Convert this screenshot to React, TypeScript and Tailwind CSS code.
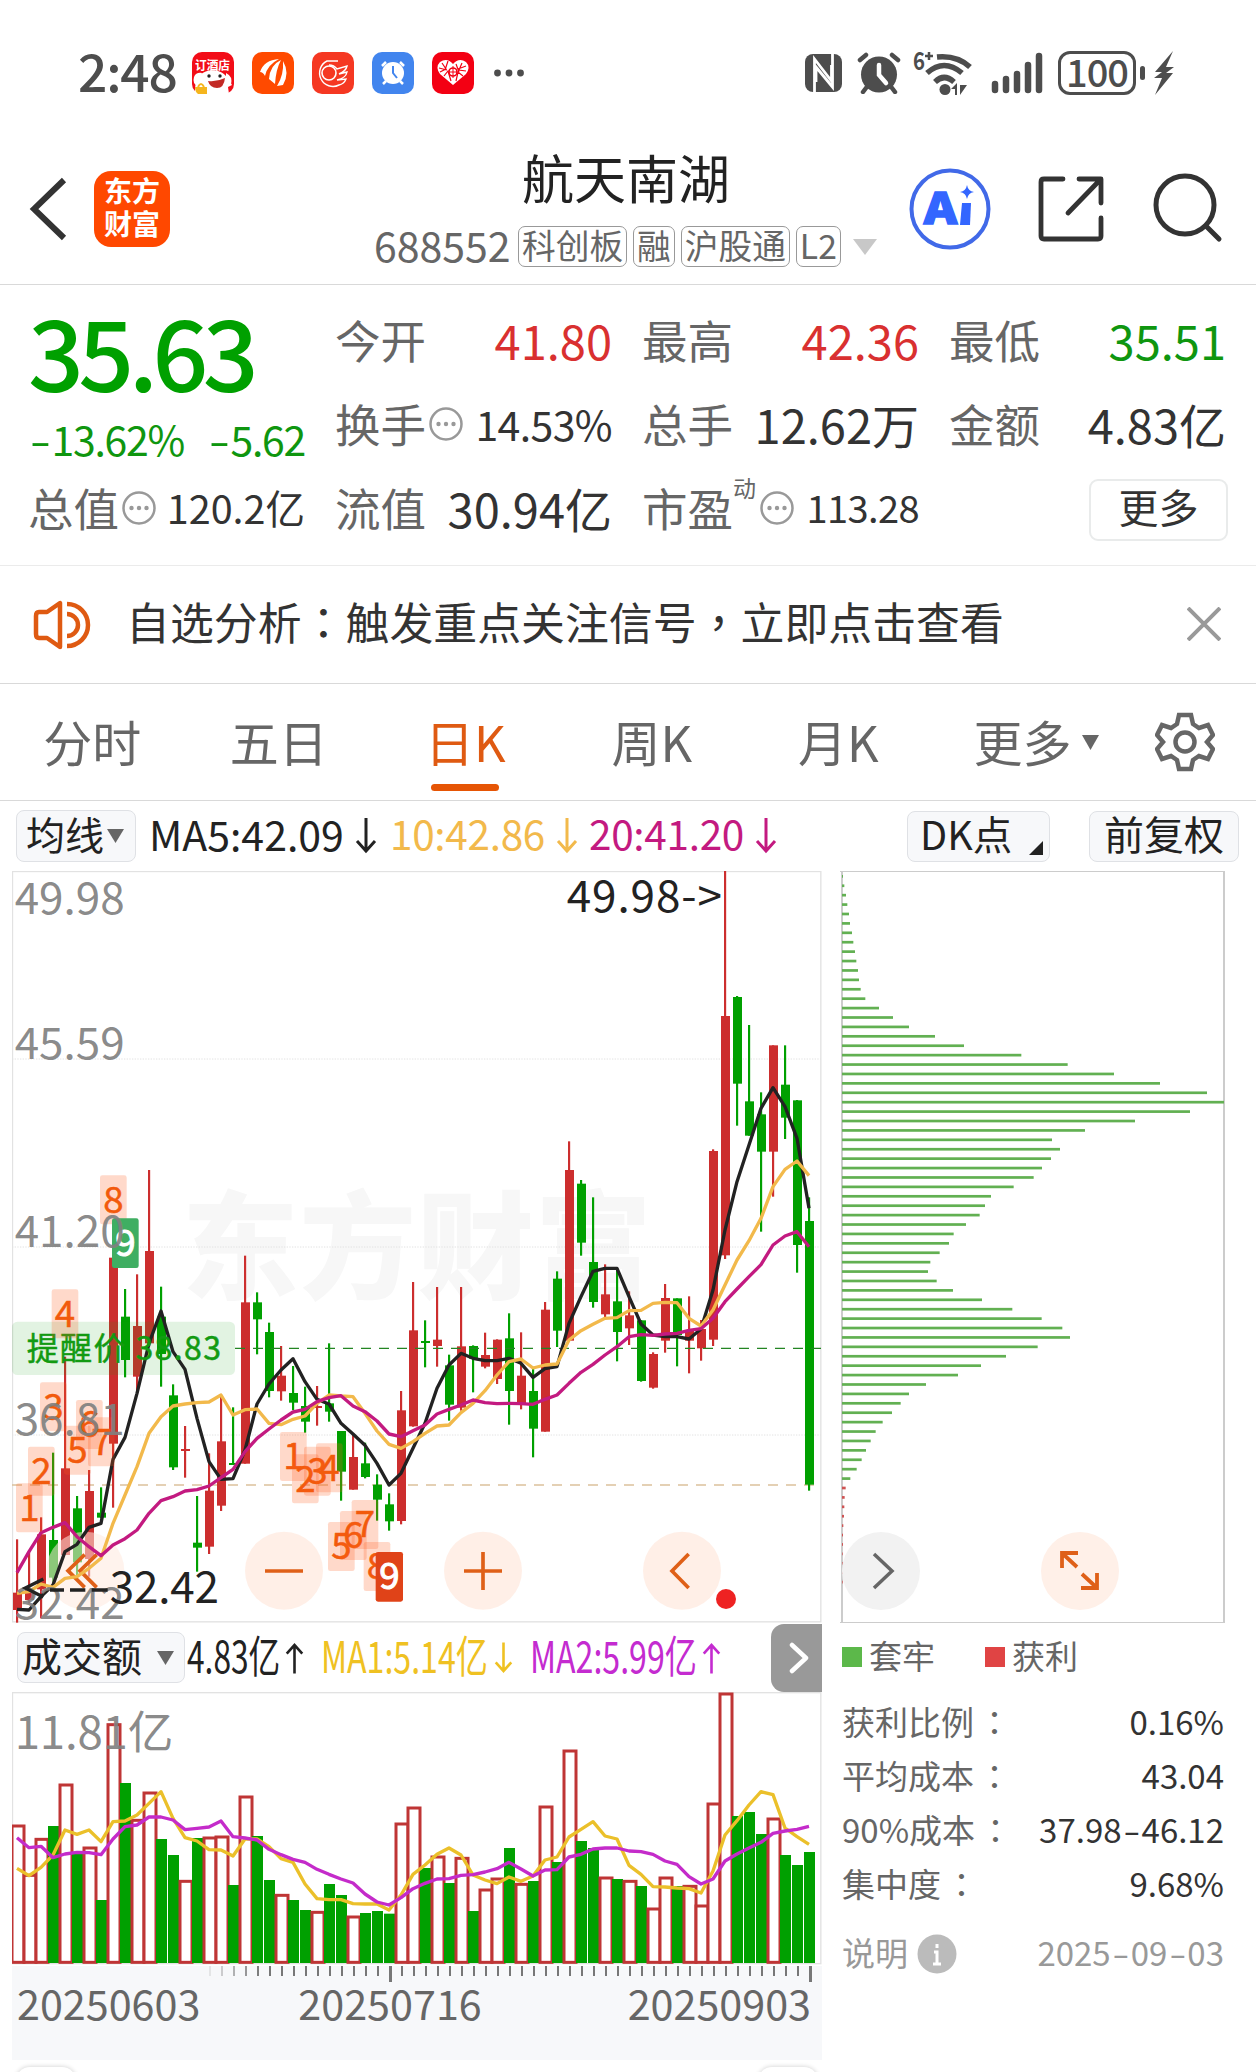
import type { ReactNode } from "react";
import { clsx } from "clsx";

type Tone = "up" | "down" | "normal";

// Chart data is kept in thirds of a pixel: [up, high, low, bodyTop, bodyBottom]
type Candle = [number, number, number, number, number];

const CANDLES: Candle[] = [
  [1, 1228, 1478, 1388, 1440], [1, 1268, 1420, 1375, 1410], [1, 1162, 1465, 1213, 1378], [0, 968, 1370, 1230, 1343],
  [1, 680, 1275, 1015, 1275], [0, 1098, 1335, 1135, 1297], [1, 1020, 1340, 1083, 1287], [0, 1072, 1165, 1148, 1163],
  [1, 383, 1133, 383, 941], [0, 477, 742, 560, 690], [1, 433, 780, 588, 740], [1, 120, 650, 363, 640],
  [0, 470, 770, 560, 672], [0, 763, 1020, 796, 1012], [1, 888, 1043, 957, 963], [0, 1098, 1325, 1238, 1253],
  [1, 970, 1272, 1082, 1250], [1, 798, 1143, 934, 1127], [0, 832, 1005, 999, 1005], [1, 377, 1001, 517, 1001],
  [0, 487, 673, 517, 568], [0, 578, 802, 606, 783], [1, 648, 812, 737, 784], [0, 708, 840, 789, 818],
  [0, 770, 908, 828, 875], [1, 768, 887, 828, 834], [0, 640, 875, 820, 845], [0, 903, 1112, 903, 1025],
  [1, 912, 1079, 981, 1079], [0, 938, 1045, 1000, 1041], [0, 1033, 1172, 1064, 1109], [0, 1090, 1202, 1123, 1174],
  [1, 783, 1183, 841, 1173], [1, 456, 890, 601, 889], [0, 571, 712, 633, 639], [1, 471, 710, 629, 648],
  [0, 674, 872, 706, 824], [1, 471, 842, 649, 833], [0, 646, 787, 648, 686], [1, 608, 715, 675, 710],
  [1, 628, 762, 629, 747], [0, 550, 884, 625, 783], [1, 607, 838, 737, 824], [0, 714, 982, 783, 896],
  [1, 516, 905, 539, 905], [0, 424, 651, 446, 602], [1, 34, 632, 120, 632], [0, 150, 377, 161, 338],
  [0, 202, 533, 396, 516], [1, 403, 562, 493, 553], [0, 420, 694, 514, 606], [1, 484, 645, 556, 595],
  [0, 570, 755, 571, 753], [1, 667, 776, 672, 773], [1, 462, 668, 504, 632], [0, 505, 709, 505, 615],
  [1, 499, 730, 600, 632], [1, 570, 692, 597, 655], [1, 58, 648, 63, 629], [1, -777, 387, -342, 376],
  [0, -402, -13, -399, -139], [0, -315, 17, -86, 17], [0, -113, 305, -47, 65], [1, -254, 200, -254, 65],
  [0, -254, 27, -136, -37], [0, -90, 428, -89, 345], [0, 202, 1082, 273, 1064],
];

const MA5 = [
  1438, 1440, 1400, 1365, 1265, 1243, 1192, 1180, 988, 922, 790, 640, 543, 665, 718, 865, 995, 1048, 1046, 960, 822, 762,
  720, 686, 755, 808, 822, 880, 912, 946, 1000, 1065, 1030, 955, 880, 775, 705, 670, 685, 692, 692, 685, 700, 742, 716,
  710, 580, 500, 424, 415, 415, 500, 582, 615, 620, 620, 627, 597, 480, 300, 155, 45, -65, -127, -70, 25, 235,
];
const MA10 = [
  1390, 1385, 1362, 1372, 1345, 1340, 1315, 1285, 1180, 1095, 1010, 910, 860, 828, 822, 818, 816, 795, 855, 839, 837, 880,
  884, 868, 858, 820, 795, 798, 800, 850, 903, 943, 955, 935, 910, 888, 885, 848, 820, 782, 735, 695, 687, 714, 705, 702,
  630, 602, 583, 565, 563, 542, 541, 520, 517, 518, 565, 588, 540, 465, 390, 332, 265, 170, 118, 93, 137,
];
const MA20 = [
  1328, 1265, 1208, 1192, 1178, 1220, 1250, 1277, 1245, 1226, 1200, 1150, 1112, 1100, 1083, 1079, 1068, 1043, 1018, 965,
  925, 897, 870, 846, 838, 815, 803, 797, 828, 845, 873, 912, 920, 902, 885, 852, 838, 825, 810, 818, 821, 820, 821, 823,
  808, 795, 760, 727, 703, 675, 650, 620, 614, 616, 612, 610, 601, 596, 565, 515, 477, 440, 404, 345, 318, 305, 350,
];

const VOLUMES = [
  614, 762, 654, 618, 491, 700, 680, 840, 310, 489, 597, 515, 657, 705, 780, 654, 650, 647, 795, 527, 648, 780, 822, 840,
  870, 873, 792, 825, 887, 879, 873, 881, 608, 560, 744, 707, 789, 711, 873, 806, 773, 684, 789, 783, 557, 726, 389, 663,
  684, 770, 777, 780, 798, 863, 770, 798, 795, 854, 548, 218, 588, 576, 642, 593, 705, 735, 696,
];
const VOL_MA1 = [
  745, 767, 742, 705, 630, 643, 630, 665, 605, 603, 585, 550, 515, 595, 653, 663, 689, 690, 708, 657, 657, 680, 716, 727,
  792, 836, 839, 839, 851, 852, 852, 870, 825, 763, 735, 703, 684, 705, 765, 780, 791, 771, 784, 768, 720, 711, 651, 628,
  605, 648, 657, 736, 763, 800, 801, 804, 806, 819, 753, 645, 602, 555, 515, 524, 624, 650, 673,
];
const VOL_MA2 = [
  653, 683, 679, 713, 702, 697, 698, 704, 657, 620, 615, 591, 591, 600, 629, 625, 621, 603, 650, 654, 660, 688, 704, 718,
  727, 748, 763, 777, 789, 822, 846, 855, 833, 806, 790, 777, 776, 766, 764, 756, 746, 727, 747, 768, 750, 749, 711, 703,
  687, 684, 684, 693, 695, 703, 723, 733, 770, 792, 777, 723, 702, 684, 667, 640, 633, 628, 619,
];

const CHIPS = [
  39, 43, 48, 52, 57, 60, 66, 70, 75, 79, 84, 87, 92, 106, 147, 189, 237, 315, 402, 574, 713, 852, 990, 1131, 1182, 1080,
  915, 765, 666, 690, 663, 636, 611, 551, 483, 465, 449, 408, 371, 357, 329, 301, 294, 320, 369, 456, 547, 635, 697, 720,
  623, 528, 453, 384, 288, 237, 212, 186, 158, 137, 122, 108, 95, 80, 61, 47, 44, 43, 42, 40, 39, 39, 38, 38, 38, 38,
];
const FIRST_PROFIT_CHIP = 65;

const MARKS: [string, number, number][] = [
  ["8", 300, 136], ["4", 155, 478], ["3", 120, 757], ["2", 84, 950], ["1", 48, 1060], ["5", 192, 887], ["6", 228, 810],
  ["7", 264, 862], ["1", 840, 906], ["2", 876, 973], ["3", 912, 950], ["4", 948, 940], ["5", 984, 1176],
  ["6", 1020, 1143], ["7", 1055, 1110], ["8", 1091, 1236],
];

const AXIS_LABELS: [string, number][] = [
  ["49.98", -649], ["45.59", -213], ["41.20", 352], ["36.81", 915], ["32.42", 1467],
];

const xAt = (index: number) => 51 + 36 * index;
const toPoints = (values: number[]) => values.map((value, index) => `${xAt(index)},${value}`).join(" ");

export default function App() {
  return (
    <div className="flex h-[2072px] w-[1256px] flex-col overflow-hidden bg-white font-['Noto_Sans_CJK_SC',sans-serif] leading-none text-[#333]">
      <StatusBar />
      <Header />
      <QuotePanel />
      <Notice />
      <Tabs />
      <IndicatorRow />
      <main className="flex gap-[18px] pl-3">
        <section className="w-[810px] shrink-0">
          <CandleChart />
          <VolumeHeader />
          <VolumeChart />
          <DateAxis />
        </section>
        <ChipPanel />
      </main>
    </div>
  );
}

function StatusBar() {
  return (
    <div className="flex h-[145px] shrink-0 items-center pl-[78px] text-[#4d4d4d]">
      <span className="relative -top-[3px] w-[114px] text-[51.500px] font-medium tracking-[-1.200px]">2:48</span>
      <div className="flex gap-[18px]">
        <svg className="size-[42px]" viewBox="0 0 42 42">
          <rect width="42" height="42" rx="10" fill="#f20d18" />
          <path d="M3 42q-1-12 5-19c7-7 20-6 26 1l6 9-4 2 1 7z" fill="#fff" />
          <path d="M2 25q2-5 8-4l-4 13q-6-2-4-9M34 21q7 3 5 12l-5-3z" fill="#fff" />
          <circle cx="17" cy="24" r="1.700" fill="#222" />
          <circle cx="28" cy="24" r="1.700" fill="#222" />
          <path d="M16 29q9 1 17-3-1 10-8 10-7 0-9-7" fill="#c22a25" />
          <path d="M3 35h12v7H6q-3-2-3-7" fill="#f5b51d" />
          <path d="M6 35q3-6 6 0" fill="none" stroke="#f5b51d" strokeWidth="2" />
          <text x="3" y="18" fontSize="12" fontWeight="700" fill="#fff" textLength="35" lengthAdjust="spacingAndGlyphs">订酒店</text>
        </svg>
        <svg className="size-[42px]" viewBox="0 0 42 42">
          <rect width="42" height="42" rx="10" fill="#ff4a00" />
          <path d="M8 20Q12 8 27 7 15 13 13 24q-2-4-5-4M17 27Q18 13 29 8q-5 9-6 24zM25 34q7-11 6-25 7 12 0 24z" fill="#fff" />
        </svg>
        <svg className="size-[42px]" viewBox="0 0 42 42">
          <rect width="42" height="42" rx="10" fill="#f53822" />
          <circle cx="17" cy="21" r="7" fill="none" stroke="#fff" strokeWidth="1.600" />
          <path d="M26 9H15A12 12 0 1 0 27 33q5-1 7-6l-9 1q9-2 10-8l-8 2q7-3 8-8l-10 3q-3-4-8-4" fill="none" stroke="#fff" strokeWidth="1.400" />
        </svg>
        <svg className="size-[42px]" viewBox="0 0 42 42">
          <rect width="42" height="42" rx="10" fill="#4285ee" />
          <circle cx="21" cy="21" r="11" fill="#fff" />
          <path d="M14 29l-3 3M28 29l3 3M10 14l4-4M32 14l-4-4" stroke="#fff" strokeWidth="2.500" />
          <path d="M21 14v7l4 5" fill="none" stroke="#4285ee" strokeWidth="2" />
        </svg>
        <svg className="size-[42px]" viewBox="0 0 42 42">
          <rect width="42" height="42" rx="10" fill="#f30013" />
          <path d="M21 33L8 22q-5-7 0-12 7-5 13 2 6-7 13-2 5 5 0 12z" fill="#fff" />
          <path d="M10 11l4 6-6 3M16 9l-3 9M12 24l4-5 3 10M30 11l-3 7 7 1M24 12l3 8M24 29l2-9 5 4M7 16l8 2M26 17l8-3" stroke="#f30013" strokeWidth="1.200" fill="none" />
          <circle cx="21" cy="20" r="4" fill="none" stroke="#f30013" strokeWidth="1.600" />
          <path d="M21 14v12M17 20h8" stroke="#f30013" />
        </svg>
      </div>
      <svg className="ml-[19px] h-2 w-8" viewBox="0 0 32 8" fill="currentColor">
        <circle cx="4.500" cy="4" r="3.400" />
        <circle cx="16" cy="4" r="3.400" />
        <circle cx="27.500" cy="4" r="3.400" />
      </svg>
      <svg className="ml-[280px] h-[38px] w-[37px]" viewBox="0 0 37 38">
        <rect width="37" height="38" rx="8" fill="currentColor" />
        <path d="M9.500 38V5l17 22V11M27.500 0v33L11 13v15" fill="none" stroke="#fff" strokeWidth="2.800" />
      </svg>
      <svg className="ml-[15px] h-[42px] w-[44px]" viewBox="0 0 44 42" fill="none" stroke="currentColor" strokeLinecap="round">
        <circle cx="22" cy="22.500" r="18" fill="currentColor" stroke="none" />
        <path d="M3 8l6-5M41 8l-6-5M9 36l-3 4M35 36l3 4" strokeWidth="4.500" />
        <path d="M22 13v10l7 8" stroke="#fff" strokeWidth="4.500" />
      </svg>
      <svg className="ml-[12px] h-[44px] w-[60px] overflow-visible" viewBox="0 0 60 44" fill="none" stroke="currentColor" strokeWidth="5.500">
        <text x="0" y="19" fontSize="25" fontWeight="700" fill="currentColor" stroke="none" textLength="12" lengthAdjust="spacingAndGlyphs">6</text>
        <path d="M12 5h8M16 1v8" strokeWidth="2.500" />
        <path d="M24 6q20-2 33 10M14 22q17-15 35 0M22 31q9-9 19 0" />
        <circle cx="32" cy="38.500" r="5.500" fill="currentColor" stroke="none" />
        <path d="M38 38l6-6v12h-2v-6zM47 34v10l7-10h-5z" fill="currentColor" stroke="none" />
      </svg>
      <svg className="ml-[17px] h-[42px] w-[54px]" viewBox="0 0 54 42" stroke="currentColor" strokeWidth="6.500" strokeLinecap="round">
        <path d="M5 32v6M16 27v11M27 22v16M38 13v25M49 4v34" />
      </svg>
      <span className="ml-[14px] flex h-[44px] w-[78px] items-center justify-center rounded-xl border-[3px] border-current text-[38px] font-medium tracking-[-1px]">
        <span className="relative -top-[2px]">100</span>
      </span>
      <span className="ml-[4px] h-[14px] w-[5px] rounded-full bg-current" />
      <svg className="ml-[9px] h-[44px] w-[20px]" viewBox="0 0 20 44" fill="currentColor">
        <path d="M19 0L1 21h7l-8 6h8L1 44l18-22h-7l8-6h-8z" />
      </svg>
    </div>
  );
}

function Header() {
  return (
    <header className="flex h-[140px] shrink-0 border-b border-[#d9d9d9] pb-[12px] pl-[26px]">
      <div className="flex w-[320px] items-center gap-[24px]">
        <svg className="h-[68px] w-[44px]" viewBox="0 0 44 68" fill="none" stroke="#333" strokeWidth="6">
          <path d="M38 5L8 34l30 29" />
        </svg>
        <div className="grid size-[76px] place-items-center rounded-[17px] bg-[#ff4800] text-center text-[28px] font-bold leading-[33px] text-white">
          <span className="-mt-1">东方<br />财富</span>
        </div>
      </div>
      <div className="flex w-[560px] shrink-0 flex-col pt-[6px]">
        <h1 className="ml-[176px] text-[52px] font-normal text-[#222]">航天南湖</h1>
        <div className="mt-[23px] flex items-center gap-[6px] pl-[28px] text-[#666]">
          <span className="relative -top-[2px] w-[138px] text-[41px]">688552</span>
          <Tag>科创板</Tag>
          <Tag>融</Tag>
          <Tag>沪股通</Tag>
          <Tag>L2</Tag>
          <svg className="ml-[6px] h-4 w-6" viewBox="0 0 24 16" fill="#c8c8c8"><path d="M0 0h24L12 16z" /></svg>
        </div>
      </div>
      <div className="flex items-center">
        <svg className="ml-[3px] size-[82px]" viewBox="0 0 82 82">
          <circle cx="41" cy="41" r="38.500" fill="none" stroke="#4169e8" strokeWidth="4" />
          <text x="15" y="56" fontSize="43" fontWeight="900" fill="#3366ff" stroke="#3366ff" strokeWidth="1.500" textLength="33" lengthAdjust="spacingAndGlyphs">A</text>
          <path d="M53 35h9l-1 22h-10z" fill="#3366ff" />
          <path d="M58 17q1 6 7 7-6 1-7 7-1-6-7-7 6-1 7-7" fill="#3366ff" />
        </svg>
        <svg className="ml-[46px] size-[68px]" viewBox="0 0 68 68" fill="none" stroke="#333" strokeWidth="4.800" strokeLinecap="round" strokeLinejoin="round">
          <path d="M26 4H7Q4 4 4 7v54q0 3 3 3h54q3 0 3-3V43M42 4h22v24M62 6L31 38" />
        </svg>
        <svg className="-mt-[2px] ml-[47px] size-[72px]" viewBox="0 0 72 72" fill="none" stroke="#333" strokeWidth="5" strokeLinecap="round">
          <circle cx="33" cy="33" r="29" />
          <path d="M54 54l13 13" />
        </svg>
      </div>
    </header>
  );
}

function Tag({ children }: { children: ReactNode }) {
  return (
    <span className="flex h-[41px] items-center whitespace-nowrap rounded-[7px] border border-[#999] px-[3px] text-[33.700px]">
      <span className="relative -top-[2px]">{children}</span>
    </span>
  );
}

// Stretches the hyphen to the width of a digit dash
function Dashed({ text }: { text: string }) {
  return text.split("-").map((part, index) => (
    <span key={index}>
      {index > 0 && <span className="mx-[0.130em] inline-block scale-x-[1.500]">-</span>}
      {part}
    </span>
  ));
}

function InfoDots() {
  return (
    <svg className="relative -top-[2px] mx-[3px] size-[34px] shrink-0" viewBox="0 0 34 34" fill="#999">
      <circle cx="17" cy="17" r="15.500" fill="none" stroke="#999" strokeWidth="2.500" />
      <circle cx="9.500" cy="17" r="2.200" />
      <circle cx="17" cy="17" r="2.200" />
      <circle cx="24.500" cy="17" r="2.200" />
    </svg>
  );
}

function Stat({ label, value, tone = "normal", info = false, sup, valueClass = "text-[47px]" }: {
  label: string;
  value: string;
  tone?: Tone;
  info?: boolean;
  sup?: string;
  valueClass?: string;
}) {
  return (
    <div className="flex h-[84px] items-center whitespace-nowrap">
      <span className="relative -top-[2px] text-[45.500px] text-[#666]">{label}</span>
      {sup && <span className="relative -top-[23px] w-[24px] text-[23px] text-[#666]">{sup}</span>}
      {info && <InfoDots />}
      <span
        className={clsx(
          "relative -top-[3px] ml-auto",
          valueClass,
          tone === "up" && "text-[#d93030]",
          tone === "down" && "text-[#0f960f]",
        )}
      >
        {value}
      </span>
    </div>
  );
}

function QuotePanel() {
  return (
    <section className="grid h-[281px] shrink-0 grid-cols-4 gap-x-[30px] border-b border-[#ebebeb] pl-[28px] pr-[30px] pt-[15px]">
      <div>
        <div className="h-[168px] text-[#00a000]">
          <div className="text-[98px] font-medium tracking-[-5.500px]">35.63</div>
          <div className="mt-[20px] flex justify-between text-[41px] tracking-[-1.300px] text-[#0f960f]">
            <span><Dashed text="-13.62%" /></span>
            <span><Dashed text="-5.62" /></span>
          </div>
        </div>
        <Stat label="总值" value="120.2亿" info valueClass="text-[39.500px]" />
      </div>
      <div>
        <Stat label="今开" value="41.80" tone="up" />
        <Stat label="换手" value="14.53%" info valueClass="text-[41px] tracking-[-0.600px]" />
        <Stat label="流值" value="30.94亿" />
      </div>
      <div>
        <Stat label="最高" value="42.36" tone="up" />
        <Stat label="总手" value="12.62万" />
        <Stat label="市盈" value="113.28" info sup="动" valueClass="text-[38px] tracking-[-0.600px]" />
      </div>
      <div>
        <Stat label="最低" value="35.51" tone="down" />
        <Stat label="金额" value="4.83亿" />
        <div className="flex h-[84px] items-center justify-end">
          <button className="relative left-[2px] grid h-[62px] w-[139px] place-items-center rounded-[9px] border-2 border-[#e9ebeb] text-[40px]">
            <span className="relative -top-[4px]">更多</span>
          </button>
        </div>
      </div>
    </section>
  );
}

function Notice() {
  return (
    <section className="flex h-[118px] shrink-0 items-center border-b border-[#d9d9d9] pl-[33px] pr-[35px]">
      <svg className="h-[50px] w-[58px]" viewBox="0 0 58 50" fill="none" stroke="#df5a12" strokeWidth="4.500" strokeLinejoin="round">
        <path d="M27 3v44l-13-9H6q-3 0-3-4V16q0-4 3-4h8z" />
        <path d="M34 4a21 21 0 0 1 0 42M34 14a11 11 0 0 1 0 22" />
      </svg>
      <p className="relative -top-[3px] ml-[35px] whitespace-nowrap text-[43.900px]">
        自选分析<span className="font-['Noto_Sans_CJK_TC',sans-serif]">：</span>触发重点关注信号
        <span className="font-['Noto_Sans_CJK_TC',sans-serif]">，</span>立即点击查看
      </p>
      <svg className="relative -top-[1px] ml-auto size-[34px]" viewBox="0 0 34 34" stroke="#999" strokeWidth="4">
        <path d="M1 1l32 32M33 1L1 33" />
      </svg>
    </section>
  );
}

function Tabs() {
  return (
    <nav className="flex h-[117px] shrink-0 items-center border-b border-[#d9d9d9] text-[49px] text-[#666]">
      {["分时", "五日", "日K", "周K", "月K"].map((tab) => {
        const isActive = tab === "日K";
        return (
          <button key={tab} className={clsx("relative h-full w-[186.500px]", isActive && "text-[#df5a12]")}>
            <span className="relative -left-[1px] -top-[2px]">{tab}</span>
            {isActive && <span className="absolute bottom-[9px] left-[58px] h-[7px] w-[68px] rounded-full bg-[#e65505]" />}
          </button>
        );
      })}
      <button className="ml-[41px] flex items-center">
        <span className="relative -top-[2px]">更多</span>
        <svg className="ml-[10px] h-[15px] w-[17px]" viewBox="0 0 17 15" fill="#666"><path d="M0 0h17L8.500 15z" /></svg>
      </button>
      <svg className="ml-[56px] size-[60px]" viewBox="0 0 60 60" fill="none" stroke="#666" strokeWidth="4.500">
        <path d="M24 3h12l2 9 6 4 9-3 5 10-6 7 6 7-5 10-9-3-6 4-2 9H24l-2-9-6-4-9 3L2 37l6-7-6-7L7 13l9 3 6-4z" />
        <circle cx="30" cy="30" r="9.500" />
      </svg>
    </nav>
  );
}

function Arrow({ up = false, className }: { up?: boolean; className?: string }) {
  return (
    <svg className={clsx("shrink-0", className)} viewBox="0 0 22 36" fill="none" stroke="currentColor" strokeWidth="3">
      <path d={up ? "M11 36V3M2 13l9-10 9 10" : "M11 0v33M2 23l9 10 9-10"} />
    </svg>
  );
}

const pillClass = "flex items-center whitespace-nowrap rounded-[8px] border border-[#dfe1e5] bg-[#f7f8fa] text-[#222]";

function IndicatorRow() {
  return (
    <div className="flex h-[70px] shrink-0 items-center pl-4 pr-[17px] text-[40.500px] text-[#222]">
      <button className={clsx(pillClass, "h-[52px] w-[120px] pl-[9px] text-[39px]")}>
        <span className="relative -top-[3px]">均线</span>
        <svg className="ml-[3px] h-[14px] w-[17px]" viewBox="0 0 17 14" fill="#666"><path d="M0 0h17L8.500 14z" /></svg>
      </button>
      <div className="ml-[13px] flex w-[241px] items-center">
        <span className="relative -top-[3px] w-[206px] text-[41px]">MA5:42.09</span>
        <Arrow className="h-9 w-[22px]" />
      </div>
      <div className="flex w-[199px] items-center text-[#f2b94b]">
        <span className="relative -top-[3px] w-[166px] tracking-[-0.300px]">10:42.86</span>
        <Arrow className="h-9 w-[22px]" />
      </div>
      <div className="flex items-center text-[#c31a80]">
        <span className="relative -top-[3px] w-[166px] tracking-[-0.300px]">20:41.20</span>
        <Arrow className="h-9 w-[22px]" />
      </div>
      <button className={clsx(pillClass, "ml-auto h-[51px] w-[143px] pl-[12px] text-[39.500px]")}>
        <span className="relative -top-[3px]">DK点</span>
        <svg className="ml-auto mr-[6px] mt-6 size-[14px]" viewBox="0 0 14 14" fill="#222"><path d="M14 0v14H0z" /></svg>
      </button>
      <button className={clsx(pillClass, "ml-[39px] h-[51px] w-[150px] justify-center text-[40px]")}>
        <span className="relative -top-[3px]">前复权</span>
      </button>
    </div>
  );
}

function CandleChart() {
  return (
    <svg className="block h-[752px] w-[810px]" viewBox="36 -777 2430 2256">
      <text x="545" y="480" fontSize="350" fontWeight="900" fill="#f7f7f7" textLength="1410">东方财富</text>
      <rect x="37.500" y="-775.500" width="2425" height="2251" fill="none" stroke="#e2e2e2" strokeWidth="4" />
      {[-213, 351, 915].map((y) => (
        <line key={y} x1="36" x2="2463" y1={y} y2={y} stroke="#e2e2e2" strokeWidth="3" strokeDasharray="4 4" />
      ))}
      <line x1="36" x2="2463" y1="1065" y2="1065" stroke="#dcc19c" strokeWidth="4" strokeDasharray="30 24" />

      {CANDLES.map(([up, high, low, top, bottom], index) => {
        const fill = up ? "#cc2e2e" : "#00a000";
        return (
          <g key={index} fill={fill}>
            <rect x={xAt(index) - 3} y={high} width="6.500" height={low - high} />
            <rect x={xAt(index) - 12} y={top} width="27" height={bottom - top} />
          </g>
        );
      })}

      <rect x="36" y="575" width="669" height="160" rx="16" fill="#12a012" fillOpacity="0.120" />
      <line x1="705" x2="2463" y1="655" y2="655" stroke="#238523" strokeWidth="3.500" strokeDasharray="30 24" />

      <g fill="#ffeadf" fillOpacity="0.750">
        <circle cx="256" cy="1322" r="117" fillOpacity="0.550" />
        <circle cx="852" cy="1322" r="117" />
        <circle cx="1449" cy="1322" r="117" />
        <circle cx="2046" cy="1322" r="117" />
      </g>
      <g fill="none" stroke="#df6018" strokeWidth="11">
        <path d="M254 1274l-50 48 50 50M290 1274l-50 48 50 50" />
        <path d="M795 1323h114M1392 1323h114M1449 1266v114M2066 1272l-50 51 50 51" />
      </g>
      <circle cx="2178" cy="1407" r="30" fill="#ee2222" />

      <g fill="none" strokeWidth="10" strokeLinejoin="round">
        <polyline points={toPoints(MA5)} stroke="#222" />
        <polyline points={toPoints(MA10)} stroke="#f2b94b" />
        <polyline points={toPoints(MA20)} stroke="#c31a80" />
      </g>
      <text x="80" y="690" fontSize="96" fill="#129a12" stroke="#129a12" strokeWidth="1.500" textLength="583">提醒价 38.83</text>

      {MARKS.map(([mark, x, y]) => (
        <g key={`${x}-${y}`}>
          <rect x={x} y={y} width="80" height="147" rx="7" fill="#ff5a1a" fillOpacity="0.230" />
          <text x={x + 40} y={y + 112} fontSize="110" fill="#f25a0c" stroke="#f25a0c" strokeWidth="1.500" textAnchor="middle">{mark}</text>
        </g>
      ))}
      <rect x="336" y="265" width="80" height="149" rx="7" fill="#3fae62" />
      <text x="376" y="377" fontSize="110" fill="#fff" stroke="#fff" strokeWidth="3" textAnchor="middle">9</text>
      <rect x="1127" y="1266" width="82" height="149" rx="7" fill="#e04318" />
      <text x="1168" y="1378" fontSize="110" fill="#fff" stroke="#fff" strokeWidth="3" textAnchor="middle">9</text>

      {AXIS_LABELS.map(([label, y]) => (
        <text key={label} x="44" y={y} fontSize="132" fill="#808080" fillOpacity="0.920" textLength="330">{label}</text>
      ))}

      <text x="1700" y="-655" fontSize="132" fill="#222" textLength="466">49.98-&gt;</text>
      <path d="M130 1347l-54 27 54 27M150 1380h42M210 1380h46M275 1380h48" fill="none" stroke="#222" strokeWidth="10" />
      <text x="329" y="1418" fontSize="132" fill="#222" textLength="328">32.42</text>
    </svg>
  );
}

function VolumeHeader() {
  return (
    <div className="flex h-[69px] items-center whitespace-nowrap pl-[5px] text-[44px] text-[#222]">
      <button className={clsx(pillClass, "h-[51px] w-[168px] pl-[4px] text-[40px]")}>
        <span className="relative -top-[3px]">成交额</span>
        <svg className="ml-[15px] h-[14px] w-[17px]" viewBox="0 0 17 14" fill="#666"><path d="M0 0h17L8.500 14z" /></svg>
      </button>
      <div className="ml-[2px] flex w-[134px] items-center">
        <span className="relative -top-[4px] w-[98px] origin-left scale-x-[0.720]">4.83亿</span>
        <Arrow up className="h-[38px] w-[19px]" />
      </div>
      <div className="flex w-[209px] items-center text-[#efc122]">
        <span className="relative -top-[4px] w-[173px] origin-left scale-x-[0.730]">MA1:5.14亿</span>
        <Arrow className="h-[38px] w-[19px]" />
      </div>
      <div className="flex items-center text-[#c42bd0]">
        <span className="relative -top-[4px] w-[172px] origin-left scale-x-[0.730]">MA2:5.99亿</span>
        <Arrow up className="h-[38px] w-[19px]" />
      </div>
      <button className="ml-auto grid h-[68px] w-[51px] place-items-center rounded-l-[13px] bg-[#999]">
        <svg className="ml-1 h-8 w-5" viewBox="0 0 20 32" fill="none" stroke="#fff" strokeWidth="4.500" strokeLinecap="round" strokeLinejoin="round">
          <path d="M3 3l14 13L3 29" />
        </svg>
      </button>
    </div>
  );
}

function VolumeChart() {
  return (
    <svg className="block h-[274px] w-[810px]" viewBox="36 216 2430 822">
      <rect x="37.500" y="218" width="2425" height="813" fill="none" stroke="#e2e2e2" strokeWidth="4" />
      {VOLUMES.map((top, index) =>
        CANDLES[index][0] ? (
          <rect key={index} x={xAt(index) - 15} y={top + 4} width="36" height={1023 - top} fill="#fff" stroke="#bf3535" strokeWidth="9" />
        ) : (
          <rect key={index} x={xAt(index) - 15} y={top} width="33" height={1029 - top} fill="#00a000" />
        ),
      )}
      <g fill="none" strokeWidth="10" strokeLinejoin="round">
        <polyline points={toPoints(VOL_MA1)} stroke="#ebc02a" />
        <polyline points={toPoints(VOL_MA2)} stroke="#c42bca" />
      </g>
      <text x="44" y="387" fontSize="137" fill="#808080" fillOpacity="0.920" textLength="476">11.81亿</text>
    </svg>
  );
}

function DateAxis() {
  const ticks = Array.from({ length: 51 }, (_, index) => index);

  return (
    <>
      <div className="h-[94px] bg-[#f7f8fa]">
        <svg className="block h-4 w-full" viewBox="0 0 810 16">
          {ticks.map((tick) => {
            const isMajor = tick === 15 || tick === 50;
            return (
              <rect
                key={tick}
                x={197 + 12 * tick}
                width={isMajor ? 3 : 2}
                height={isMajor ? 16 : 10}
                fill="#777"
                opacity={Math.min(1, 0.15 + tick * 0.2)}
              />
            );
          })}
        </svg>
        <div className="flex px-[5px] text-[41.300px] text-[#666]">
          <span>20250603</span>
          <span className="ml-[98px]">20250716</span>
          <span className="ml-auto mr-[6px]">20250903</span>
        </div>
      </div>
      <div className="flex h-[12px] justify-between overflow-hidden pt-[7px]">
        <span className="ml-1 h-10 w-[60px] rounded-[14px] bg-white shadow-[0_0_5px_rgba(0,0,0,0.2)]" />
        <span className="mr-1 h-10 w-[60px] rounded-[14px] bg-white shadow-[0_0_5px_rgba(0,0,0,0.2)]" />
      </div>
    </>
  );
}

function ChipPanel() {
  const rows = [
    ["获利比例", "0.16%"],
    ["平均成本", "43.04"],
    ["90%成本", "37.98-46.12"],
    ["集中度", "9.68%"],
  ];

  return (
    <aside className="w-[385px] text-[33px] text-[#666]">
      <svg className="block h-[752px] w-[385px]" viewBox="0 0 385 752">
        <path d="M0 .500h385M0 751.500h385" stroke="#ccc" />
        <path d="M2 0v752M384 0v752" stroke="#ccc" strokeWidth="2" />
        {CHIPS.map((end, index) => (
          <rect
            key={index}
            x="2"
            y={4 + index * 9.41}
            width={(end - 36) / 3}
            height="2.700"
            fill={index < FIRST_PROFIT_CHIP ? "#62b052" : "#cf5353"}
          />
        ))}
        <circle cx="41" cy="700" r="39" fill="#f2f2f2" />
        <path d="M34 683l18 17-18 17" fill="none" stroke="#666" strokeWidth="3.500" />
        <circle cx="240" cy="700" r="39" fill="#fff0e8" />
        <path d="M222 697v-15h16M223 683l14 13M241 717h16v-15M256 716l-14-13" fill="none" stroke="#df6018" strokeWidth="3.800" />
      </svg>
      <div className="pl-[2px] pr-[1px]">
        <div className="flex h-[74px] items-center pb-[6px]">
          <span className="mr-[7px] size-[20px] bg-[#5cb84a]" />
          <span className="relative -top-[2px]">套牢</span>
          <span className="ml-[50px] mr-[7px] size-[20px] bg-[#e04444]" />
          <span className="relative -top-[2px]">获利</span>
        </div>
        <dl>
          {rows.map(([label, value]) => (
            <div key={label} className="flex h-[54px] items-center justify-between">
              <dt className="relative -top-[3px]">
                {label}
                <span className="ml-[4px] font-['Noto_Sans_CJK_TC',sans-serif]">：</span>
              </dt>
              <dd className="relative -top-[3px] text-[#333]"><Dashed text={value} /></dd>
            </div>
          ))}
        </dl>
        <div className="flex h-[84px] items-center text-[#999]">
          <span className="relative -top-[3px]">说明</span>
          <svg className="relative -top-[1px] ml-[9px] size-[40px]" viewBox="0 0 40 40">
            <circle cx="20" cy="20" r="19.500" fill="#bbb" />
            <path d="M20 10v4M17 18h3v12M16 30h8" fill="none" stroke="#fff" strokeWidth="3" />
          </svg>
          <span className="relative -top-[3px] ml-auto"><Dashed text="2025-09-03" /></span>
        </div>
      </div>
    </aside>
  );
}
